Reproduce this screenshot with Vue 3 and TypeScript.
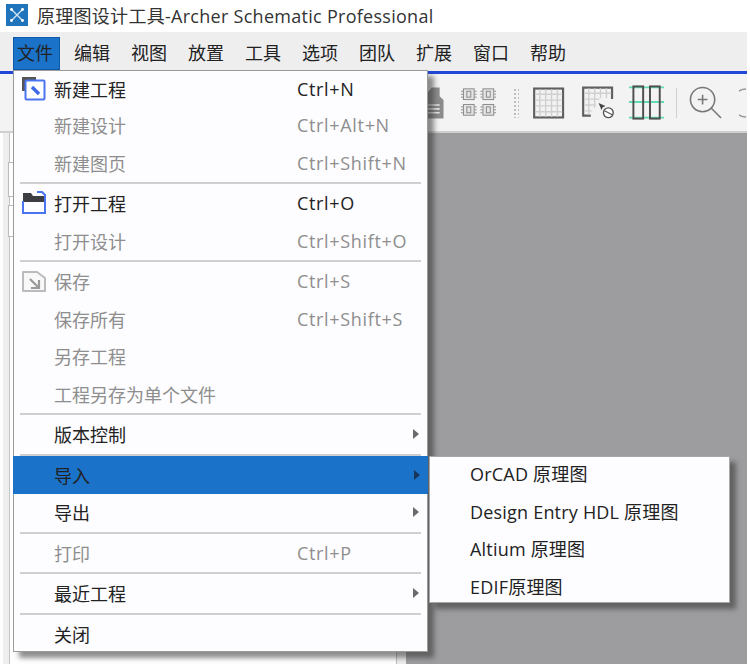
<script setup lang="ts">
type Entry =
  | { sep: true }
  | { sep?: false; label: string; key?: string; off?: boolean; icon?: string; arrow?: boolean; active?: boolean }

const menus: string[] = ['文件', '编辑', '视图', '放置', '工具', '选项', '团队', '扩展', '窗口', '帮助']
const entries: Entry[] = [
  { label: '新建工程', key: 'Ctrl+N', icon: 'new' },
  { label: '新建设计', key: 'Ctrl+Alt+N', off: true },
  { label: '新建图页', key: 'Ctrl+Shift+N', off: true },
  { sep: true },
  { label: '打开工程', key: 'Ctrl+O', icon: 'open' },
  { label: '打开设计', key: 'Ctrl+Shift+O', off: true },
  { sep: true },
  { label: '保存', key: 'Ctrl+S', off: true, icon: 'save' },
  { label: '保存所有', key: 'Ctrl+Shift+S', off: true },
  { label: '另存工程', off: true },
  { label: '工程另存为单个文件', off: true },
  { sep: true },
  { label: '版本控制', arrow: true },
  { sep: true },
  { label: '导入', arrow: true, active: true },
  { label: '导出', arrow: true },
  { sep: true },
  { label: '打印', key: 'Ctrl+P', off: true },
  { sep: true },
  { label: '最近工程', arrow: true },
  { sep: true },
  { label: '关闭' },
]
const sub: string[] = ['OrCAD 原理图', 'Design Entry HDL 原理图', 'Altium 原理图', 'EDIF原理图']
const chips: number[][] = [[0, 0], [20, 0], [0, 16], [20, 16]]
</script>

<template>
  <div class="page">
    <div class="window">
      <header class="title">
        <svg class="logo" viewBox="0 0 24 24" width="22" height="22">
          <rect width="24" height="24" fill="#1f74bb" />
          <path d="M6 6 18 18M18 6 6 18" stroke="#cfe6f7" stroke-width="1.5" />
          <circle cx="6" cy="6" r="1.6" fill="#fff" /><circle cx="18" cy="6" r="1.6" fill="#fff" />
          <circle cx="6" cy="18" r="1.6" fill="#fff" /><circle cx="18" cy="18" r="1.6" fill="#fff" />
        </svg>
        <span>原理图设计工具-Archer Schematic Professional</span>
      </header>

      <nav class="menubar">
        <span v-for="(m, i) in menus" :key="m" class="menubar-item" :class="{ open: i === 0 }">{{ m }}</span>
      </nav>

      <div class="toolbar">
        <svg class="doc-icon" viewBox="0 0 20 32" width="20" height="32">
          <path d="M0 10 8 0h8v9l4 4v19H0z" fill="#8c8c8c" />
          <path d="M4 18h12M4 22h12M4 26h12" stroke="#e8e8e8" stroke-width="1.6" />
        </svg>
        <svg class="chips" viewBox="0 0 36 32" width="36" height="32">
          <g v-for="(c, i) in chips" :key="i" :transform="`translate(${c[0]} ${c[1]})`" fill="none" stroke="#8a8a8a">
            <rect x="2.5" y="1.5" width="11" height="11" fill="#e4e4e4" />
            <rect x="6" y="4" width="4" height="6" />
            <path d="M0 4h2M0 7h2M0 10h2M14 4h2M14 7h2M14 10h2" />
          </g>
        </svg>
        <span class="grip"></span>
        <svg class="grid-icon" viewBox="0 0 32 32" width="32" height="32">
          <rect x="1.2" y="1.2" width="29.6" height="29.6" fill="#f2f2f2" stroke="#5f5f5f" stroke-width="2.2" />
          <path d="M7 2v28M13 2v28M19 2v28M25 2v28M2 7h28M2 13h28M2 19h28M2 25h28" stroke="#cfcfcf" stroke-width="1.4" />
        </svg>
        <svg class="grid-icon pick" viewBox="0 0 34 34" width="34" height="34">
          <path d="M9 30H1.2V1.2h29.6V13" fill="#f2f2f2" stroke="#5f5f5f" stroke-width="2.2" />
          <path d="M7 2v27M13 2v20M19 2v10M25 2v10M2 7h28M2 13h16M2 19h12M2 25h8" stroke="#cfcfcf" stroke-width="1.4" />
          <path d="M17 17l7 3-3 1.5-1 3z" fill="#444" />
          <circle cx="27" cy="27" r="5" fill="#fff" stroke="#555" stroke-width="1.4" />
          <path d="M23 25l8 4" stroke="#555" stroke-width="1.2" />
        </svg>
        <svg class="columns" viewBox="0 0 36 36" width="36" height="36">
          <path d="M0 2h36M0 17h36M0 33h36" stroke="#62dcae" stroke-width="2" />
          <rect x="4.5" y="1" width="10" height="33" fill="none" stroke="#4e4e4e" stroke-width="2" />
          <rect x="21.5" y="1" width="10" height="33" fill="none" stroke="#4e4e4e" stroke-width="2" />
        </svg>
        <span class="divider"></span>
        <svg class="zoom-icon" viewBox="0 0 34 34" width="33" height="33">
          <circle cx="14" cy="14" r="12.5" fill="none" stroke="#777" stroke-width="1.6" />
          <path d="M23 23l10 10M14 9v10M9 14h10" fill="none" stroke="#777" stroke-width="1.6" />
        </svg>
        <svg class="zoom-icon clipped" viewBox="0 0 8 30" width="8" height="30">
          <path d="M7 1a13 13 0 0 0 0 28" fill="none" stroke="#999" stroke-width="1.6" />
        </svg>
      </div>

      <div class="workspace">
        <aside class="side">
          <div class="side-tabs">
            <span class="side-tab"></span>
            <span class="side-tab second"></span>
          </div>
          <div class="side-body"></div>
          <div class="side-gutter"></div>
        </aside>
        <main class="canvas"></main>
      </div>

      <div class="file-menu">
        <template v-for="(e, i) in entries" :key="i">
          <div v-if="e.sep" class="sep"></div>
          <div v-else class="row" :class="{ off: e.off, active: e.active }">
            <span class="icon">
              <svg v-if="e.icon === 'new'" viewBox="0 0 24 24" width="24" height="24">
                <path d="M0 0h14v3H3v11H0z" fill="#555" />
                <rect x="3.5" y="3.5" width="19" height="19" rx="1" fill="#fff" stroke="#4a74f0" stroke-width="2" />
                <path d="M10 10l7 7" stroke="#3f6ae6" stroke-width="3.4" />
              </svg>
              <svg v-else-if="e.icon === 'open'" viewBox="0 0 24 24" width="24" height="24">
                <path d="M1 2h8l2 3h12v6H1z" fill="#3d3d44" />
                <path d="M15 1h5l3 3v18H1V10" fill="none" stroke="#4a74f0" stroke-width="2" />
                <path d="M1 22V10" stroke="#4a74f0" stroke-width="2" />
              </svg>
              <svg v-else-if="e.icon === 'save'" viewBox="0 0 24 24" width="24" height="24">
                <path d="M1 3h14l8 6v13H1z" fill="#f8f8f8" stroke="#bbb" stroke-width="2" stroke-linejoin="round" />
                <path d="M8 10l9 9M17 11v8H9" fill="none" stroke="#999" stroke-width="2.2" />
              </svg>
            </span>
            <span class="label">{{ e.label }}</span>
            <span v-if="e.key" class="key">{{ e.key }}</span>
            <span v-if="e.arrow" class="arrow"></span>

            <div v-if="e.active" class="sub-menu">
              <div v-for="s in sub" :key="s" class="sub-row">{{ s }}</div>
            </div>
          </div>
        </template>
      </div>
    </div>
  </div>
</template>

<style>
html, body { margin: 0; background: #fff; }
</style>

<style scoped>
.page {
  width: 750px;
  height: 667px;
  overflow: hidden;
  background: #fff;
  font-family: "Open Sans", "Noto Sans CJK SC", sans-serif;
  color: #222;
}
.window {
  position: relative;
  width: 747px;
  height: 664px;
  display: flex;
  flex-direction: column;
}
.title {
  height: 32px;
  box-sizing: border-box;
  padding: 0 0 3px 6px;
  display: flex;
  align-items: center;
  gap: 9px;
  font-size: 18px;
  letter-spacing: 0.28px;
  color: #333;
  white-space: nowrap;
}
.logo { flex: none; }
.menubar {
  height: 39px;
  padding: 5px 0 1px 13px;
  display: flex;
  align-items: stretch;
  background: #eeeeef;
  box-sizing: border-box;
  font-size: 18px;
}
.menubar-item {
  width: 57px;
  box-sizing: border-box;
  padding: 0 0 3px 4px;
  display: flex;
  align-items: center;
  white-space: nowrap;
}
.menubar-item.open {
  width: 47px;
  margin-right: 10px;
  padding-left: 3px;
  background: #1b73c9;
  border: 1px solid #0f5aa8;
}
.toolbar {
  height: 62px;
  border-top: 3px solid #2147d6;
  border-bottom: 2px solid #cfcfcf;
  box-sizing: border-box;
  background: #f3f3f4;
  display: flex;
  align-items: center;
  padding-left: 424px;
  overflow: hidden;
}
.doc-icon { margin-right: 17px; }
.chips { margin-right: 17px; }
.grip {
  width: 7px;
  height: 30px;
  margin-right: 14px;
  background-image: radial-gradient(circle, #bdbdbd 1px, transparent 1.2px);
  background-size: 4px 4px;
}
.pick { margin-left: 17px; margin-right: 14px; }
.columns { margin-right: 12px; }
.divider { width: 1px; height: 30px; background: #d0d0d0; margin-right: 12px; }
.zoom-icon { flex: none; }
.clipped { margin-left: 17px; }
.workspace {
  flex: 1;
  display: flex;
  min-height: 0;
}
.side {
  width: 406px;
  display: flex;
  background: #fff;
  box-sizing: border-box;
}
.side-tabs {
  width: 10px;
  background: #eeeeef;
  position: relative;
  border-left: 3px solid #fff;
  border-right: 1px solid #c4c4c4;
  box-sizing: border-box;
}
.side-tab {
  position: absolute;
  left: 5px;
  top: 29px;
  width: 5px;
  height: 33px;
  background: #fff;
  border: 1px solid #bbb;
  border-right: 0;
}
.side-tab.second { top: 72px; height: 30px; }
.side-body { flex: 1; background: #fff; }
.side-gutter {
  width: 9px;
  background: #eeeeef;
  border-left: 1px solid #bdbdbd;
}
.canvas { flex: 1; background: #9d9d9f; }

.file-menu {
  position: absolute;
  left: 13px;
  top: 70px;
  width: 415px;
  height: 582px;
  box-sizing: border-box;
  background: #fdfdff;
  border: 1px solid #9a9a9a;
  box-shadow: 6px 6px 5px rgba(50, 50, 50, 0.55);
  font-size: 18px;
}
.row {
  position: relative;
  height: 37.5px;
  display: flex;
  align-items: center;
  color: #222;
}
.row:first-child { height: 35.5px; }
.row.off { color: #8e8e8e; }
.row.active { background: #1b73c9; margin: 0 -1px; padding: 0 1px; }
.icon {
  width: 40px;
  height: 24px;
  display: flex;
  align-items: center;
  justify-content: flex-end;
  padding-right: 8px;
  box-sizing: border-box;
  flex: none;
  position: relative;
}
.label { white-space: nowrap; }
.key {
  position: absolute;
  left: 283px;
  white-space: nowrap;
  letter-spacing: 0.67px;
}
.arrow {
  position: absolute;
  right: 8px;
  width: 0;
  height: 0;
  border-left: 6px solid #6a6a6a;
  border-top: 5.5px solid transparent;
  border-bottom: 5.5px solid transparent;
}
.row.active .arrow { border-left-color: #18365c; }
.sep {
  height: 3px;
  display: flex;
  align-items: center;
  margin: 0 6px;
}
.sep::before {
  content: "";
  flex: 1;
  height: 2px;
  background: #cfcfcf;
}
.sub-menu {
  position: absolute;
  left: 416px;
  top: 0;
  width: 301px;
  height: 147px;
  box-sizing: border-box;
  background: #fdfdff;
  border: 1px solid #a8a8a8;
  box-shadow: 6px 6px 5px rgba(50, 50, 50, 0.55);
  padding-left: 40px;
  display: flex;
  flex-direction: column;
  justify-content: center;
  color: #222;
  letter-spacing: 0.2px;
}
.sub-row {
  height: 37.4px;
  flex: none;
  display: flex;
  align-items: center;
  white-space: pre;
}
</style>
